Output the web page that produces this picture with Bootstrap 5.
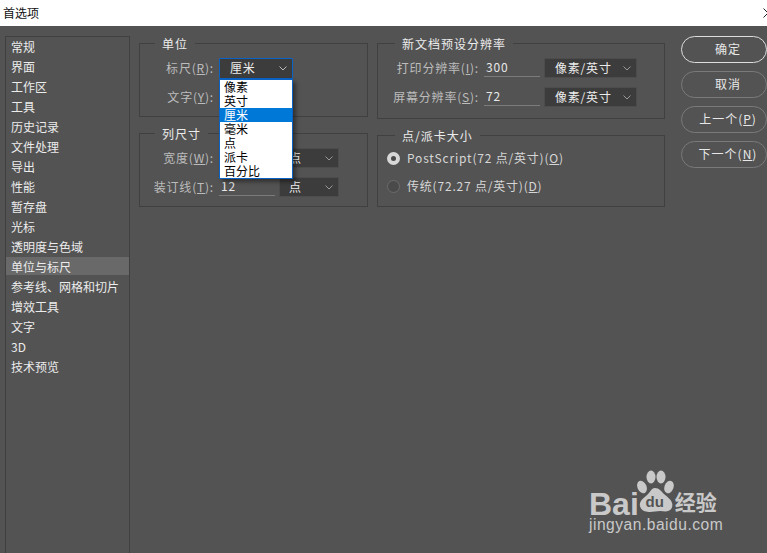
<!DOCTYPE html>
<html lang="zh">
<head>
<meta charset="utf-8">
<title>首选项</title>
<link href="https://cdn.jsdelivr.net/npm/bootstrap@5.3.0/dist/css/bootstrap.min.css" rel="stylesheet">
<style>
html,body{height:100%;overflow:hidden}
body{background:#535353;font:12px/1.2 "Noto Sans CJK SC","Liberation Sans",sans-serif;color:#d6d6d6}
.titlebar{height:26px;background:#fff;color:#111;padding-left:3px;overflow:hidden}
.titlebar svg{margin-right:-6px}
.work{height:527px;position:relative}
.sidebar{width:125px;margin:10px 0 -4px 5px;border:1px solid #404040;color:#ececec;flex:none}
.side-row{height:20px;line-height:20px;padding-left:5px}
.side-on{height:18px;line-height:19px;margin-bottom:2px;background:#696969}
.panels{margin:17px 0 0 9px;width:526px;flex:none}
.pcol-a{width:229px}
.pcol-b{width:288px;margin-left:1px}
.grp{border:1px solid #404040;position:relative;letter-spacing:.8px}
.grp-a{height:74px}
.grp-b1{height:76px}
.grp-b2{height:72px}
.cap{position:absolute;top:-9px;background:#535353;padding:0 7px;line-height:17px;color:#ececec;letter-spacing:1px}
.cap-l{left:15px}
.cap-r{left:17px}
.frow{height:20px}
.frow+.frow{margin-top:11px}
.lab{text-align:right;color:#bcbcbc;margin-right:5px;flex:none;white-space:nowrap}
.lab-a{width:74px}
.lab-b{width:101px}
.sel{background:#3c3c3c;border:1px solid #4c4c4c;height:20px;color:#ececec;padding-left:10px;border-radius:1px;flex:none}
.sel svg{margin-right:5px}
.sel-main{width:74px;height:21px;border:1px solid #0a62c4;position:relative}
.sel-sm{width:60px;margin-left:4px;padding-left:9px}
.sel-res{width:93px;margin-left:4px}
.fld{width:56px;height:19px;margin-top:-1px;border-bottom:1px solid #7b7b7b;color:#e8e8e8;padding-left:2px;line-height:17px;flex:none}
.drop{position:absolute;left:79px;top:35px;width:74px;height:100px;background:#fff;border:1px solid #0a62c4;box-shadow:3px 3px 4px rgba(0,0,0,.4);color:#000;z-index:5;letter-spacing:0;overflow:hidden}
.drop-row{height:14px;line-height:14px;padding-left:4px}
.drop-on{background:#0078d7;color:#fff}
.radio-row{height:20px;padding-left:9px}
.radio-row+.radio-row{margin-top:8px}
.rad{width:13px;height:13px;border-radius:50%;border:1px solid #6b6b6b;background:#4a4a4a;margin-right:7px;flex:none}
.rad-on{background:#4a4a4a;border:4px solid #d8d8d8}
.btncol{margin:10px 0 0 16px;width:86px;flex:none}
.pill{height:27px;border:1px solid #7a7a7a;border-radius:14px;color:#e8e8e8;padding-left:8px;letter-spacing:1px;margin-bottom:8px}
.pill-main{border-color:#dcdcdc}
.wm{position:absolute;left:589px;top:444px;width:140px;color:#c9c9c9}
.wm-top{height:47px}
.wm-bai{font:700 32px/1 "Liberation Sans",sans-serif;margin-top:18px;margin-right:-2px}
.wm-cn{font-size:21px;line-height:1;font-weight:700;margin:21px 0 0 1px}
.wm-url{font:15.6px/1 "Liberation Sans",sans-serif;letter-spacing:.5px}
.paw{flex:none}
</style>
</head>
<body>
<div class="titlebar d-flex justify-content-between align-items-center">
  <span class="lh-1">首选项</span>
  <svg width="10" height="10" viewBox="0 0 10 10"><path d="M.5.5l9 9M9.500.5l-9 9" stroke="#222" fill="none"/></svg>
</div>
<div class="work d-flex align-items-start">
  <div class="sidebar align-self-stretch">
    <div class="side-row">常规</div>
    <div class="side-row">界面</div>
    <div class="side-row">工作区</div>
    <div class="side-row">工具</div>
    <div class="side-row">历史记录</div>
    <div class="side-row">文件处理</div>
    <div class="side-row">导出</div>
    <div class="side-row">性能</div>
    <div class="side-row">暂存盘</div>
    <div class="side-row">光标</div>
    <div class="side-row">透明度与色域</div>
    <div class="side-row side-on">单位与标尺</div>
    <div class="side-row">参考线、网格和切片</div>
    <div class="side-row">增效工具</div>
    <div class="side-row">文字</div>
    <div class="side-row">3D</div>
    <div class="side-row">技术预览</div>
  </div>

  <div class="panels d-flex gap-2">
    <div class="pcol-a d-flex flex-column gap-3">
      <div class="grp grp-a pt-2">
        <span class="cap cap-l">单位</span>
        <div class="frow d-flex align-items-center mt-1 pt-1">
          <span class="lab lab-a">标尺(<u>R</u>):</span>
          <div class="sel sel-main d-flex align-items-center justify-content-between">厘米
            <svg width="8" height="5" viewBox="0 0 8 5"><path d="M.5.5L4 4 7.500.5" stroke="#bbb" fill="none"/></svg>
          </div>
        </div>
        <div class="frow d-flex align-items-center">
          <span class="lab lab-a">文字(<u>Y</u>):</span>
        </div>
        <div class="drop">
          <div class="drop-row">像素</div>
          <div class="drop-row">英寸</div>
          <div class="drop-row drop-on">厘米</div>
          <div class="drop-row">毫米</div>
          <div class="drop-row">点</div>
          <div class="drop-row">派卡</div>
          <div class="drop-row">百分比</div>
        </div>
      </div>
      <div class="grp grp-a pt-2">
        <span class="cap cap-l">列尺寸</span>
        <div class="frow d-flex align-items-center mt-1 pt-1">
          <span class="lab lab-a">宽度(<u>W</u>):</span>
          <div class="fld"></div>
          <div class="sel sel-sm d-flex align-items-center justify-content-between">点
            <svg width="8" height="5" viewBox="0 0 8 5"><path d="M.5.5L4 4 7.500.5" stroke="#999" fill="none"/></svg>
          </div>
        </div>
        <div class="frow d-flex align-items-center">
          <span class="lab lab-a">装订线(<u>T</u>):</span>
          <div class="fld">12</div>
          <div class="sel sel-sm d-flex align-items-center justify-content-between">点
            <svg width="8" height="5" viewBox="0 0 8 5"><path d="M.5.5L4 4 7.500.5" stroke="#999" fill="none"/></svg>
          </div>
        </div>
      </div>
    </div>

    <div class="pcol-b d-flex flex-column gap-3">
      <div class="grp grp-b1 pt-2">
        <span class="cap cap-r">新文档预设分辨率</span>
        <div class="frow d-flex align-items-center mt-1 pt-1">
          <span class="lab lab-b">打印分辨率(<u>I</u>):</span>
          <div class="fld">300</div>
          <div class="sel sel-res d-flex align-items-center justify-content-between">像素/英寸
            <svg width="8" height="5" viewBox="0 0 8 5"><path d="M.5.5L4 4 7.500.5" stroke="#999" fill="none"/></svg>
          </div>
        </div>
        <div class="frow d-flex align-items-center">
          <span class="lab lab-b">屏幕分辨率(<u>S</u>):</span>
          <div class="fld">72</div>
          <div class="sel sel-res d-flex align-items-center justify-content-between">像素/英寸
            <svg width="8" height="5" viewBox="0 0 8 5"><path d="M.5.5L4 4 7.500.5" stroke="#999" fill="none"/></svg>
          </div>
        </div>
      </div>
      <div class="grp grp-b2 pt-2">
        <span class="cap cap-r">点/派卡大小</span>
        <div class="radio-row d-flex align-items-center mt-1">
          <span class="rad rad-on"></span><span>PostScript(72 点/英寸)(<u>O</u>)</span>
        </div>
        <div class="radio-row d-flex align-items-center">
          <span class="rad"></span><span>传统(72.27 点/英寸)(<u>D</u>)</span>
        </div>
      </div>
    </div>
  </div>

  <div class="btncol d-flex flex-column">
    <div class="pill pill-main d-flex align-items-center justify-content-center">确定</div>
    <div class="pill d-flex align-items-center justify-content-center">取消</div>
    <div class="pill d-flex align-items-center justify-content-center">上一个(<u>P</u>)</div>
    <div class="pill d-flex align-items-center justify-content-center">下一个(<u>N</u>)</div>
  </div>

  <div class="wm">
    <div class="wm-top d-flex">
      <span class="wm-bai">Bai</span>
      <svg class="paw" width="37" height="45" viewBox="0 0 37 45">
        <ellipse cx="5" cy="17" rx="4.500" ry="6.500" fill="#c9c9c9" transform="rotate(-25 5 17)"/>
        <ellipse cx="14" cy="7" rx="4.500" ry="6.500" fill="#c9c9c9"/>
        <ellipse cx="24" cy="7" rx="4.500" ry="6.500" fill="#c9c9c9"/>
        <ellipse cx="32" cy="17" rx="4.500" ry="6.500" fill="#c9c9c9" transform="rotate(20 32 17)"/>
        <path d="M18 18c-4 0-5 5-9 8-4 3-7 6-6 10 1 5 6 6 10 6 3 0 7-1 10-1s6 1 8 0c4-1 5-5 4-8-1-4-5-6-8-9-3-3-5-6-9-6z" fill="#c9c9c9"/>
        <text x="8.500" y="37" font-family="Liberation Sans, sans-serif" font-size="15" font-weight="700" fill="#535353">du</text>
      </svg>
      <span class="wm-cn">经验</span>
    </div>
    <div class="wm-url">jingyan.baidu.com</div>
  </div>
</div>
<script src="https://cdn.jsdelivr.net/npm/bootstrap@5.3.0/dist/js/bootstrap.bundle.min.js"></script>
</body>
</html>
